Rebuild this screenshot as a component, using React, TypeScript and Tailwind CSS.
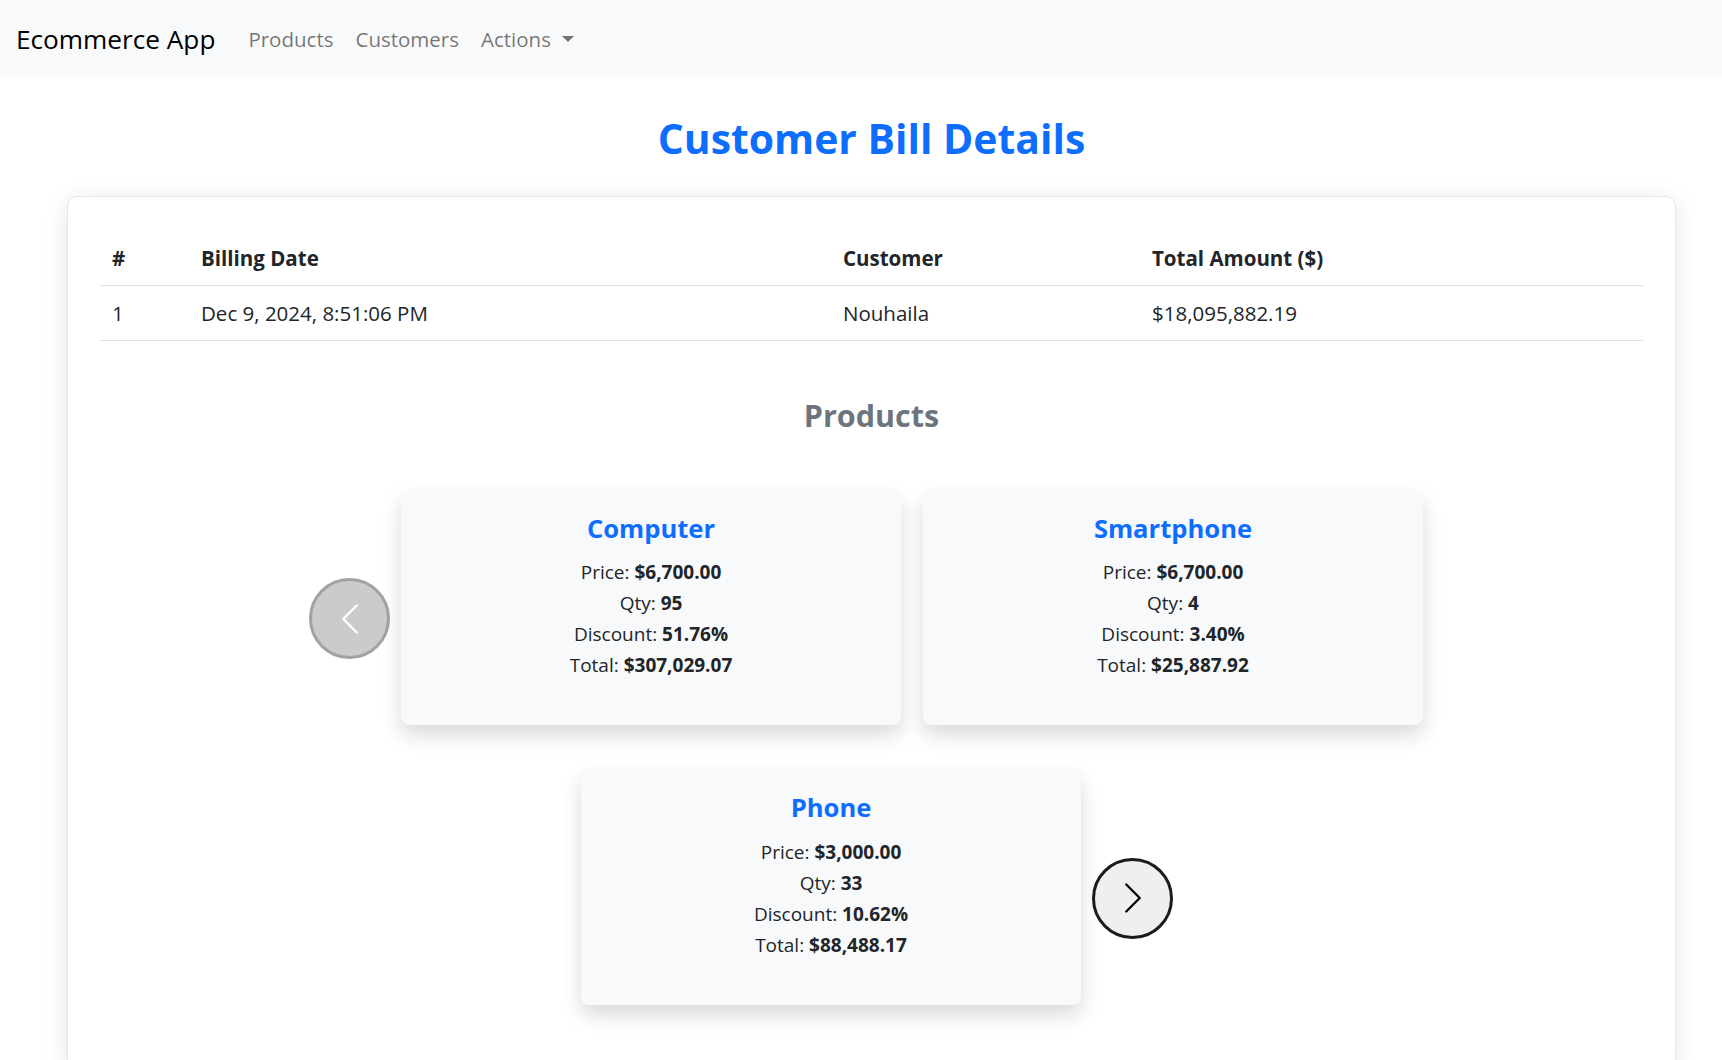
import React from "react";

type Product = {
  name: string;
  price: string;
  qty: string;
  discount: string;
  total: string;
};

const products: Product[] = [
  { name: "Computer", price: "$6,700.00", qty: "95", discount: "51.76%", total: "$307,029.07" },
  { name: "Smartphone", price: "$6,700.00", qty: "4", discount: "3.40%", total: "$25,887.92" },
  { name: "Phone", price: "$3,000.00", qty: "33", discount: "10.62%", total: "$88,488.17" },
];

const Chevron = ({ dir }: { dir: "left" | "right" }) => (
  <svg viewBox="0 0 16 16" className="w-[36px] h-[36px]" fill="currentColor">
    {dir === "left" ? (
      <path d="M11.354 1.646a.5.5 0 0 1 0 .708L5.707 8l5.647 5.646a.5.5 0 0 1-.708.708l-6-6a.5.5 0 0 1 0-.708l6-6a.5.5 0 0 1 .708 0z" />
    ) : (
      <path d="M4.646 1.646a.5.5 0 0 1 .708 0l6 6a.5.5 0 0 1 0 .708l-6 6a.5.5 0 0 1-.708-.708L10.293 8 4.646 2.354a.5.5 0 0 1 0-.708z" />
    )}
  </svg>
);

const ProductCard = ({ p }: { p: Product }) => (
  <div className="w-[500px] mx-[11px] mt-[11px] mb-[33px] bg-[#f8f9fa] rounded-[8px] shadow-[0_10px_20px_rgba(0,0,0,0.15)] pt-[24px] pb-[44px] text-center">
    <h5 className="text-[25.6px] leading-[1.2] font-bold text-[#0d6efd] mb-[13px]">{p.name}</h5>
    <div className="text-[19px] leading-[31px] text-[#212529]">
      <p>
        Price: <strong className="font-bold">{p.price}</strong>
      </p>
      <p>
        Qty: <strong className="font-bold">{p.qty}</strong>
      </p>
      <p>
        Discount: <strong className="font-bold">{p.discount}</strong>
      </p>
      <p>
        Total: <strong className="font-bold">{p.total}</strong>
      </p>
    </div>
  </div>
);

export default function App() {
  return (
    <div className="h-screen overflow-hidden bg-white text-[#212529] font-['Open_Sans',sans-serif] text-[20.5px]">
      {/* Navbar */}
      <nav className="h-[77px] bg-[#f8f9fa] flex items-center pl-[16px] pt-[2px]">
        <a href="#" className="text-[26.2px] text-black mr-[22px]">
          Ecommerce App
        </a>
        <div className="flex items-center text-black/55">
          <a href="#" className="px-[11px]">Products</a>
          <a href="#" className="px-[11px]">Customers</a>
          <a href="#" className="px-[11px] flex items-center">
            Actions
            <span className="ml-[11px] inline-block w-0 h-0 border-t-[6px] border-t-black/55 border-x-[6px] border-x-transparent mt-[-2px]"></span>
          </a>
        </div>
      </nav>

      {/* Content */}
      <main className="pl-[67px] pr-[46px] pt-[37px]">
        <h2 className="text-center text-[40.9px] leading-[1.2] font-bold text-[#0d6efd] mb-[33px]">
          Customer Bill Details
        </h2>

        <div className="bg-white border border-[#e6e6e6] rounded-[10px] shadow-[0_4px_24px_rgba(0,0,0,0.1)] px-[32px] pt-[34px] pb-[32px]">
          <table className="w-full table-fixed text-left border-collapse">
            <thead>
              <tr className="border-b border-[#dee2e6]">
                <th className="w-[89px] px-[12px] py-3 leading-[30px] font-bold">#</th>
                <th className="w-[642px] px-[12px] py-3 leading-[30px] font-bold">Billing Date</th>
                <th className="w-[309px] px-[12px] py-3 leading-[30px] font-bold">Customer</th>
                <th className="px-[12px] py-3 leading-[30px] font-bold">Total Amount ($)</th>
              </tr>
            </thead>
            <tbody>
              <tr className="border-b border-[#dee2e6]">
                <td className="px-[12px] py-3 leading-[30px]">1</td>
                <td className="px-[12px] py-3 leading-[30px]">Dec 9, 2024, 8:51:06 PM</td>
                <td className="px-[12px] py-3 leading-[30px]">Nouhaila</td>
                <td className="px-[12px] py-3 leading-[30px]">$18,095,882.19</td>
              </tr>
            </tbody>
          </table>

          <h4 className="text-center text-[30.5px] leading-[1.2] font-bold text-[#6c757d] mt-[56px] mb-[45px]">
            Products
          </h4>

          <div className="flex flex-wrap justify-center items-center">
            <button className="w-[81px] h-[81px] shrink-0 rounded-full bg-[#cbcbcb] border-[3px] border-[#a2a2a2] text-white flex items-center justify-center">
              <Chevron dir="left" />
            </button>
            {products.map((p) => (
              <ProductCard key={p.name} p={p} />
            ))}
            <button className="w-[81px] h-[81px] shrink-0 rounded-full bg-[#efefef] border-[3px] border-[#1c1c1c] text-black flex items-center justify-center">
              <Chevron dir="right" />
            </button>
          </div>
        </div>
      </main>
    </div>
  );
}
